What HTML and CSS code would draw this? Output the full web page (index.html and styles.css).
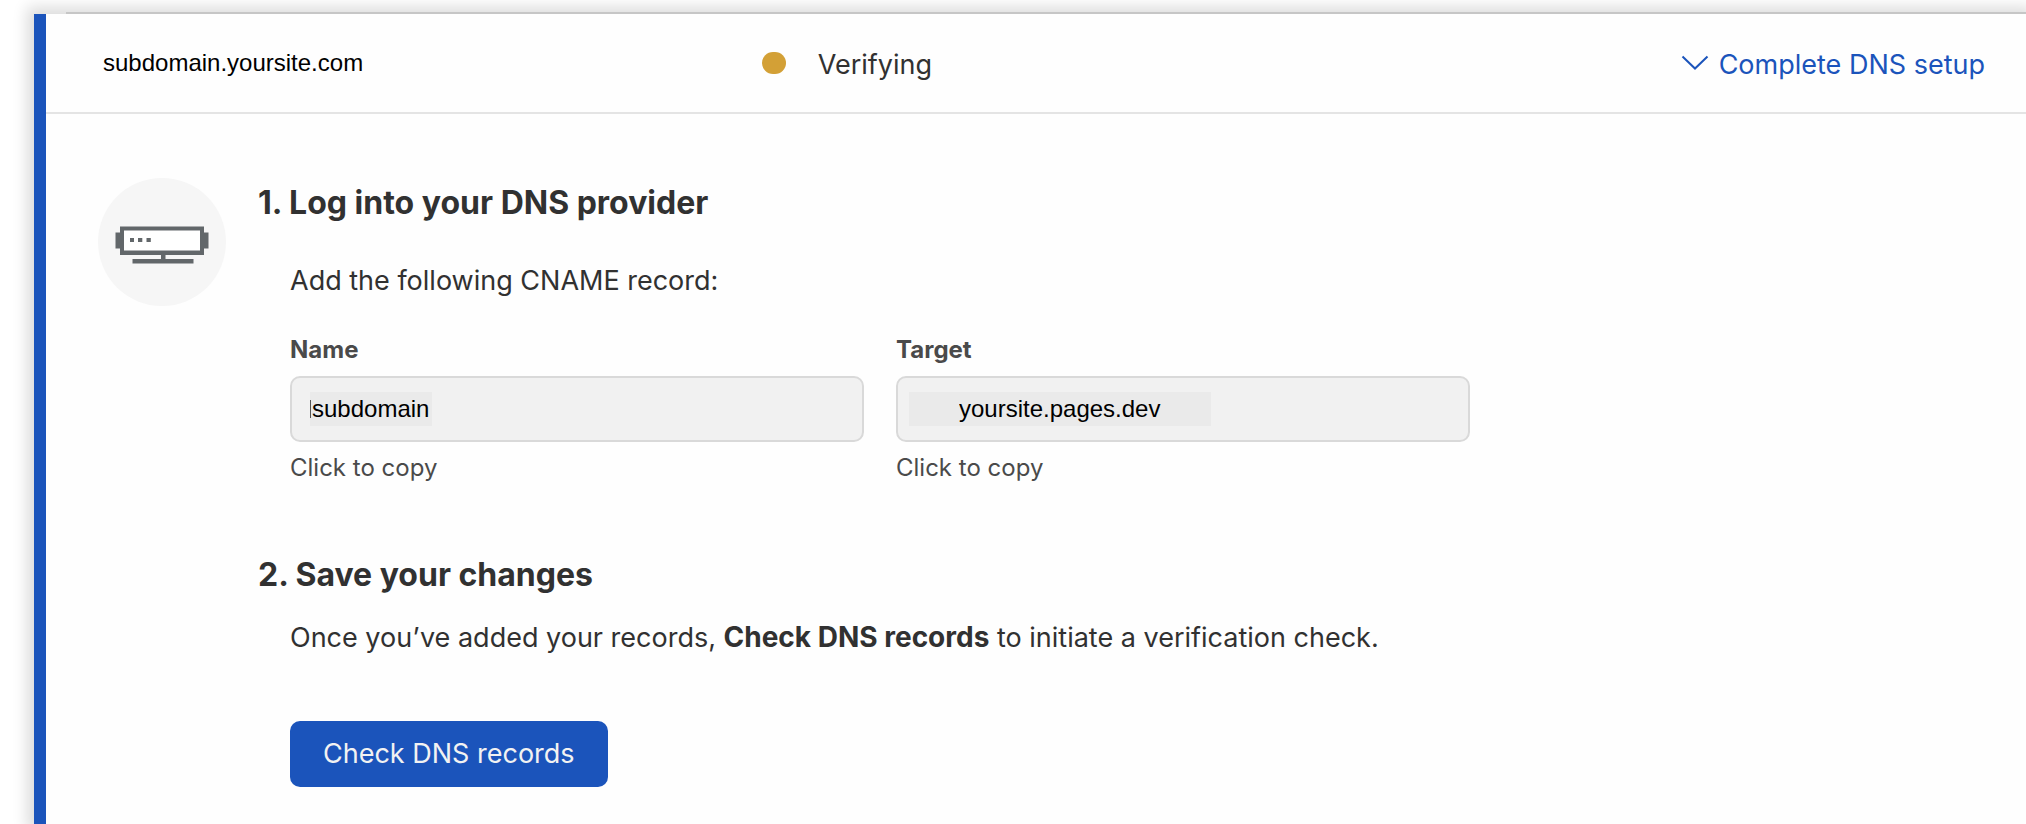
FILE: index.html
```html
<!DOCTYPE html>
<html lang="en">
<head>
<meta charset="utf-8">
<meta name="viewport" content="width=device-width, initial-scale=1">
<title>Custom domain DNS setup</title>
<link rel="stylesheet" href="styles.css">
</head>
<body>
<main class="card">
  <header class="card-header">
    <span class="domain">subdomain.yoursite.com</span>
    <span class="status"><span class="status-dot"></span><span class="status-text">Verifying</span></span>
    <a class="setup-link" href="#setup">
      <svg class="chevron" viewBox="0 0 28 16" aria-hidden="true"><path d="M1.5 1.5 14 13.5 26.500 1.500" fill="none" stroke="currentColor" stroke-width="2"/></svg>
      <span class="status-text">Complete DNS setup</span>
    </a>
  </header>
  <div class="card-body" id="setup">
    <svg class="device" viewBox="0 0 128 128" aria-hidden="true">
      <circle cx="64" cy="64" r="64" fill="#f6f6f6"/>
      <g fill="#62676a">
        <path d="M22 48.500H106V54.500H110.500V70.500H106V77H67.500V81H95.500V85.500H34.500V81H63V77H22V70.500H17.500V54.500H22Z"/>
        <path d="M26 52.500H102V72.500H26Z" fill="#fff"/>
        <path d="M32 60h4v4h-4zM40 60h4.300v4h-4.300zM48.500 60h4.300v4h-4.300z"/>
      </g>
    </svg>
    <div class="steps">
      <section>
        <h2 class="step-title">1. Log into your DNS provider</h2>
        <div class="step-content first">
          <p class="text">Add the following CNAME record:</p>
          <div class="fields">
            <div class="field">
              <label class="label" for="record-name">Name</label>
              <div class="box name-box"><input class="value name-value" id="record-name" type="text" value="subdomain" readonly></div>
              <span class="hint">Click to copy</span>
            </div>
            <div class="field">
              <label class="label" for="record-target">Target</label>
              <div class="box target-box"><input class="value target-value" id="record-target" type="text" value="yoursite.pages.dev" readonly></div>
              <span class="hint">Click to copy</span>
            </div>
          </div>
        </div>
      </section>
      <section class="second">
        <h2 class="step-title">2. Save your changes</h2>
        <div class="step-content">
          <p class="text">Once you’ve added your records, <strong>Check DNS records</strong> to initiate a verification check.</p>
          <button class="button" type="button">Check DNS records</button>
        </div>
      </section>
    </div>
  </div>
</main>
</body>
</html>
```

FILE: styles.css
```css
* {
  box-sizing: border-box;
}

body {
  margin: 0;
  min-height: 100vh;
  display: flex;
  padding: 14px 0 0 34px;
  overflow: hidden;
  background: #fff;
  color: #313131;
  font: 27px/36px Inter, "Liberation Sans", sans-serif;
}

.card {
  position: relative;
  flex: 1;
  min-width: 0;
  border-left: 12px solid #1b54bb;
  background: #fefefe;
  box-shadow: 0 0 14px 7px rgba(0, 0, 0, 0.14);
}

.card::before {
  content: "";
  position: absolute;
  top: -2px;
  right: 0;
  left: 20px;
  height: 2px;
  background: #c6c6c6;
}

.card-header {
  display: grid;
  grid-template-columns: 35% 1fr auto;
  align-items: center;
  min-height: 100px;
  padding: 0 41px 0 57px;
  border-bottom: 2px solid #e4e4e4;
}

.domain {
  color: #000;
  font: 24px/28px "Liberation Sans", sans-serif;
}

.status {
  display: flex;
  align-items: center;
  gap: 32px;
}

.status-dot {
  width: 24px;
  height: 22px;
  border-radius: 11px;
  background: #d3a036;
}

.status-text {
  padding-top: 3px;
}

.setup-link {
  display: flex;
  align-items: center;
  gap: 10px;
  color: #1b54bb;
  text-decoration: none;
}

.chevron {
  width: 28px;
  height: 16px;
}

.card-body {
  display: flex;
  gap: 32px;
  padding: 64px 52px 36px;
}

.device {
  flex: none;
  width: 128px;
  height: 128px;
}

.steps {
  flex: 1;
  padding-top: 5px;
}

.step-title {
  margin: 0;
  font-size: 32px;
  font-weight: 700;
  line-height: 40px;
}

.step-content {
  padding: 24px 0 0 32px;
}

.first {
  padding-top: 40px;
}

.second {
  margin-top: 71px;
}

.text {
  margin: 0;
}

.text strong {
  font-size: 28px;
  font-weight: 700;
}

.fields {
  display: grid;
  grid-template-columns: 1fr 1fr;
  gap: 32px;
  max-width: 1180px;
  margin-top: 35px;
}

.label,
.hint {
  display: block;
  color: #4a4a4a;
  font-size: 24px;
  line-height: 32px;
}

.label {
  margin-bottom: 10px;
  font-weight: 700;
}

.hint {
  margin-top: 10px;
}

.box {
  padding: 14px 18px;
  border: 2px solid #d9d9d9;
  border-radius: 10px;
  background: #f1f1f1;
}

.target-box {
  padding-left: 11px;
}

.value {
  display: block;
  max-width: 100%;
  height: 34px;
  border: 0;
  border-radius: 0;
  outline: 0;
  background: #eaeaea;
  color: #000;
  font: 24px/34px "Liberation Sans", sans-serif;
}

.name-value {
  width: 122px;
  padding: 0 0 0 2px;
  background: linear-gradient(#555, #555) 0 center / 1px 18px no-repeat #eaeaea;
}

.target-value {
  width: 302px;
  padding: 0 0 0 50px;
}

.button {
  display: block;
  margin-top: 65px;
  padding: 15px 33px;
  border: 0;
  border-radius: 10px;
  background: #1b54bb;
  color: #f2f2f2;
  font: inherit;
}
```
